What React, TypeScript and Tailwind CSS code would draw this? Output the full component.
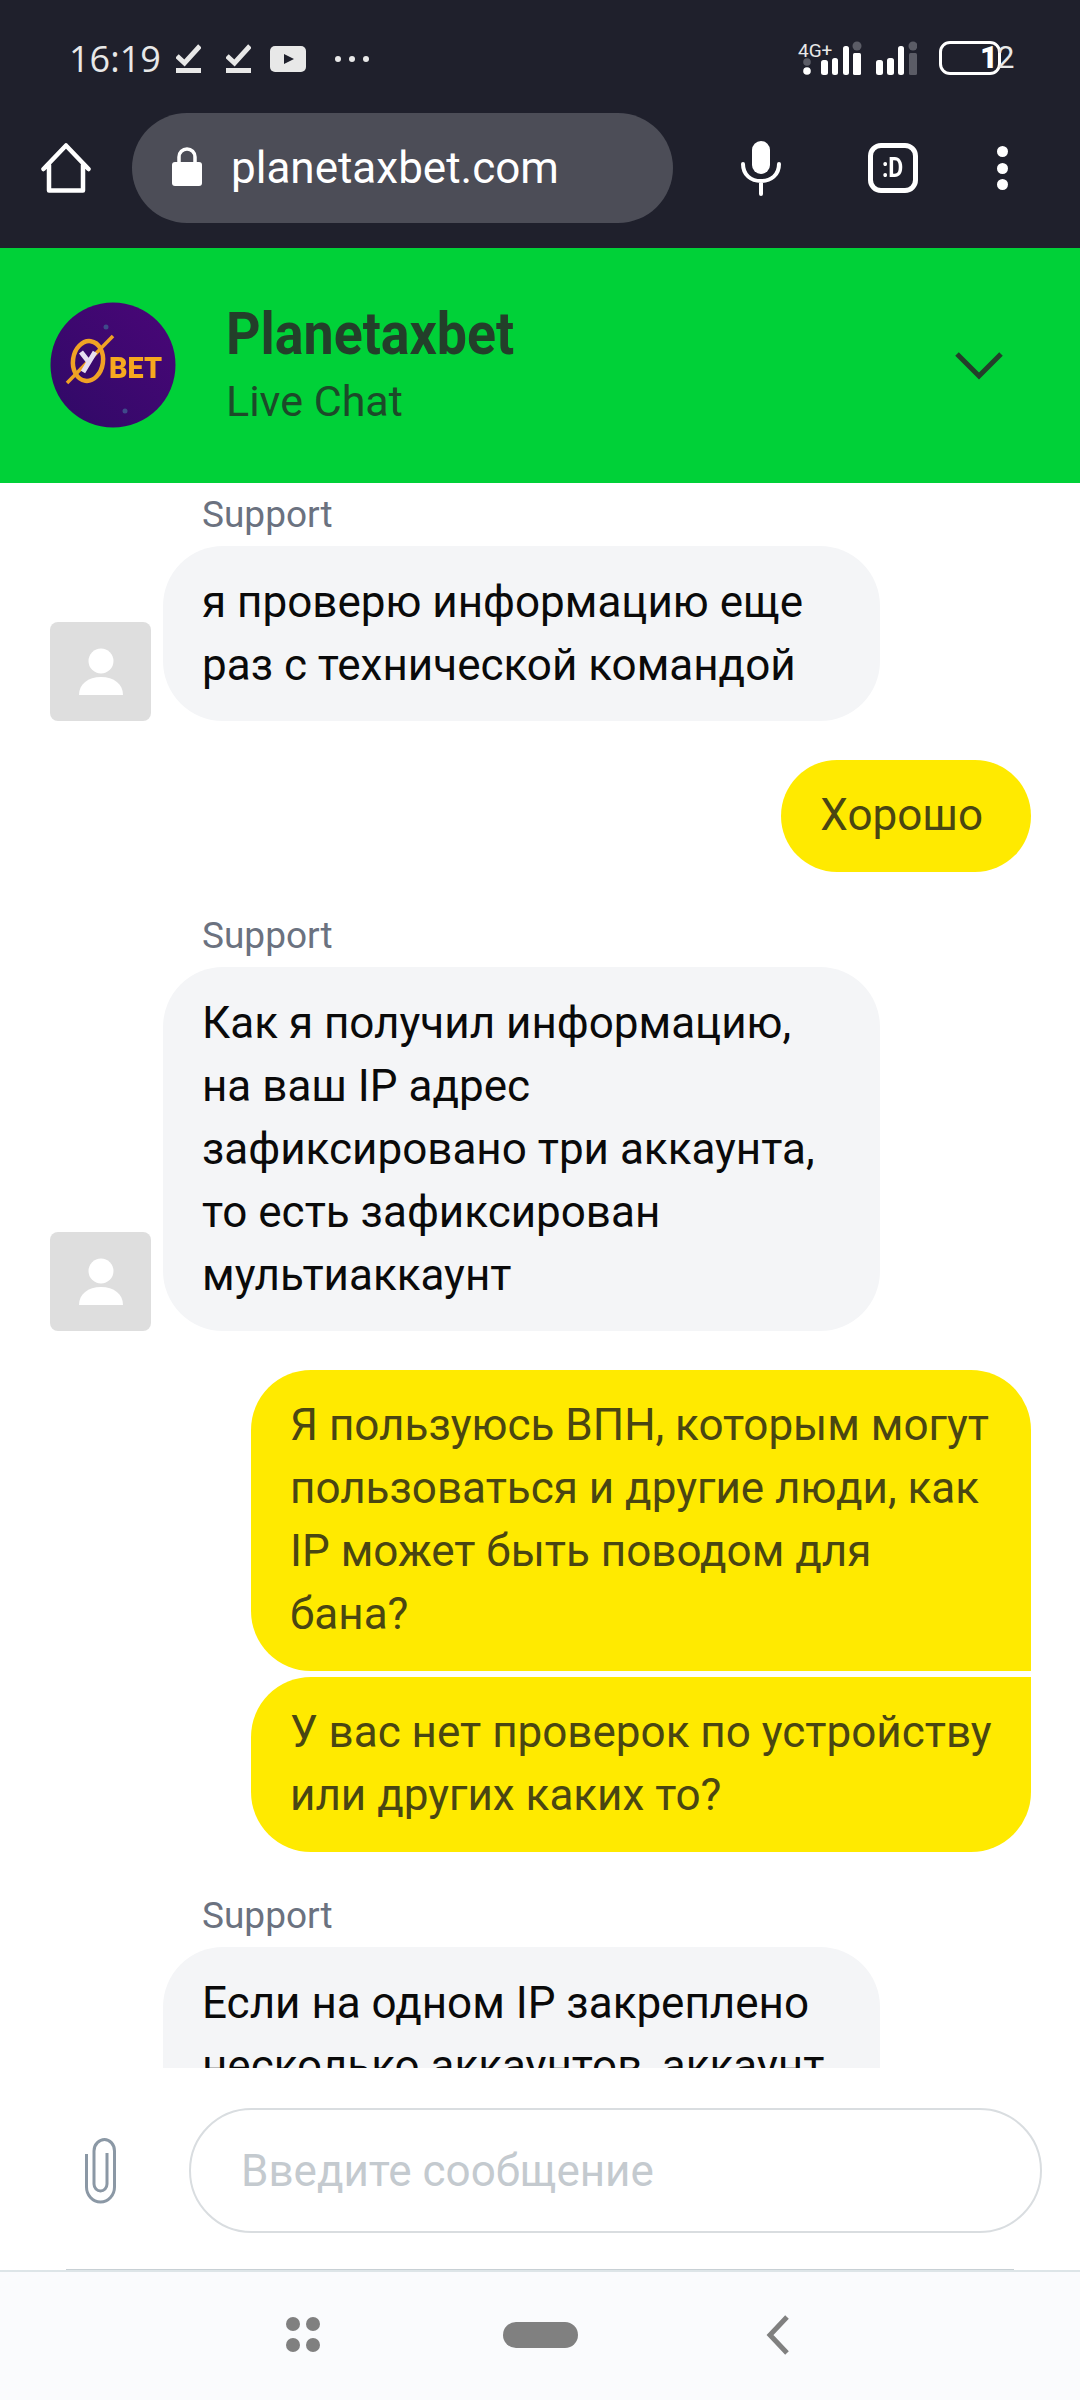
import { ReactNode } from "react";

const font = { fontFamily: "Roboto, sans-serif" };

function CheckIcon({ className }: { className: string }) {
  return (
    <svg width="25" height="30" viewBox="0 0 25 30" className={className}>
      <path d="M1 12l7.5 7L24 2" fill="none" stroke="currentColor" strokeWidth="5" />
      <rect y="24" width="25" height="5" fill="currentColor" />
    </svg>
  );
}

function StatusBar() {
  return (
    <div className="flex h-[113px] items-start justify-between pl-[69px] pr-[79px] pt-[41px] text-[#e8e8e8]">
      <div className="flex h-[36px] items-center">
        <span className="text-[36px] leading-[36px] font-['Open_Sans',sans-serif]">16:19</span>
        <CheckIcon className="ml-[15px]" />
        <CheckIcon className="ml-[25px]" />
        <svg width="36" height="26" viewBox="0 0 36 26" className="ml-[19px]">
          <rect width="36" height="26" rx="5" fill="currentColor" />
          <path d="M14 8l10 5-10 5z" fill="#1f202c" />
        </svg>
        <div className="ml-[29px] flex gap-[8px]">
          <span className="h-[6px] w-[6px] rounded-full bg-[#e8e8e8]" />
          <span className="h-[6px] w-[6px] rounded-full bg-[#e8e8e8]" />
          <span className="h-[6px] w-[6px] rounded-full bg-[#e8e8e8]" />
        </div>
      </div>
      <div className="flex items-start">
        <div className="relative h-[34px] w-[119px]">
          <svg width="119" height="34" viewBox="0 0 119 34">
            <circle cx="9" cy="21" r="3.8" fill="#5b5c66" />
            <circle cx="9" cy="30" r="3.8" fill="#fff" />
            <rect x="23" y="19" width="7" height="15" rx="2.5" fill="#fff" />
            <rect x="34" y="17" width="6" height="17" rx="2.5" fill="#fff" />
            <rect x="45" y="5" width="6" height="29" rx="2.5" fill="#fff" />
            <rect x="55" y="12" width="8" height="22" rx="1.5" fill="#fff" />
            <circle cx="59" cy="5" r="4.5" fill="#5b5c66" />
            <rect x="78" y="19" width="7" height="15" rx="2.5" fill="#fff" />
            <rect x="89" y="17" width="7" height="17" rx="2.5" fill="#fff" />
            <rect x="100" y="5" width="6" height="29" rx="2.5" fill="#fff" />
            <rect x="111" y="12" width="8" height="22" rx="1.5" fill="#5b5c66" />
            <circle cx="115" cy="5" r="4.5" fill="#5b5c66" />
          </svg>
          <span className="absolute left-0 top-0 text-[19px] leading-[20px] text-[#e8e8e8]">4G+</span>
        </div>
        <div className="relative ml-[22px] h-[34px] w-[62px] rounded-[11px] border-[3px] border-white">
          <span className="absolute left-[38px] top-[0px] text-[31px] leading-[28px] font-black text-white">1</span>
          <span className="absolute left-[55px] top-[0px] text-[31px] leading-[28px] text-[#e8e8e8]">2</span>
        </div>
      </div>
    </div>
  );
}

function BrowserBar() {
  return (
    <div className="flex h-[135px] items-start pl-[41px]">
      <svg width="50" height="50" viewBox="0 0 50 50" className="mt-[30px]">
        <path d="M2.5 26L25 2.5 47.5 26M8 22v25.5h34V22" fill="none" stroke="#fff" strokeWidth="4.5" strokeLinecap="round" strokeLinejoin="round" />
      </svg>
      <div className="ml-[41px] flex h-[110px] w-[541px] items-center rounded-full bg-[#4c4d57] pl-[40px]">
        <svg width="30" height="40" viewBox="0 0 30 40" className="mb-[2px]">
          <path d="M7 18v-8a8 8 0 0 1 16 0v8" fill="none" stroke="#fff" strokeWidth="3.5" />
          <rect y="15" width="30" height="24" rx="3" fill="#fff" />
        </svg>
        <span className="ml-[29px] text-[44px] leading-none text-white">planetaxbet.com</span>
      </div>
      <svg width="40" height="56" viewBox="0 0 40 56" className="ml-[68px] mt-[27px]">
        <rect x="11" y="1" width="18" height="33" rx="9" fill="#fff" />
        <path d="M2 24c0 11 8 17 18 17s18-6 18-17M20 41v13" fill="none" stroke="#fff" strokeWidth="4" strokeLinecap="round" />
      </svg>
      <div className="ml-[87px] mt-[30px] flex h-[50px] w-[50px] items-center justify-center rounded-[13px] border-[5px] border-white text-[27px] leading-none font-bold text-white">
        <span className="scale-x-[0.85]">:D</span>
      </div>
      <div className="ml-[79px] mt-[33px] flex flex-col gap-[5.5px]">
        <span className="h-[11px] w-[11px] rounded-full bg-white" />
        <span className="h-[11px] w-[11px] rounded-full bg-white" />
        <span className="h-[11px] w-[11px] rounded-full bg-white" />
      </div>
    </div>
  );
}

function Logo() {
  return (
    <svg width="126" height="126" viewBox="0 0 126 126">
      <defs>
        <linearGradient id="logoBg" x1="1" y1="0" x2="0" y2="1">
          <stop offset="0" stopColor="#4a0678" />
          <stop offset="1" stopColor="#2f0a66" />
        </linearGradient>
      </defs>
      <circle cx="63" cy="63" r="62.5" fill="url(#logoBg)" />
      <circle cx="56" cy="25" r="2.5" fill="#3f4a8a" />
      <circle cx="75" cy="109" r="2.5" fill="#3f4a8a" />
      <g className="blur-[0.7px]">
        <ellipse cx="38" cy="59" rx="15" ry="20" fill="none" stroke="#f0a225" strokeWidth="4.5" transform="rotate(8 38 59)" />
        <path d="M17 81L63 34" stroke="#f0a225" strokeWidth="3.5" />
        <path d="M31 50l7 9M45 50L33 70" fill="none" stroke="#e6dff0" strokeWidth="5" />
        <text x="59" y="76" fontSize="30" fontWeight="900" fill="#f7a91f" textLength="53" lengthAdjust="spacingAndGlyphs" fontFamily="Roboto, sans-serif">BET</text>
      </g>
    </svg>
  );
}

function Header() {
  return (
    <div className="flex h-[235px] items-center bg-[#00d138] pb-[2px] pl-[50px] pr-[76px]">
      <Logo />
      <div className="ml-[50px] flex flex-col">
        <span className="origin-left scale-x-[0.91] text-[59px] leading-[62px] font-bold whitespace-nowrap text-[#233f2a]">Planetaxbet</span>
        <span className="mt-[11px] text-[43px] leading-[50px] text-[#1c4a29]">Live Chat</span>
      </div>
      <svg width="50" height="30" viewBox="0 0 50 30" className="ml-auto">
        <path d="M3 4l22 22L47 4" fill="none" stroke="#233f2a" strokeWidth="5" />
      </svg>
    </div>
  );
}

function Avatar() {
  return (
    <div className="flex h-[99px] w-[101px] shrink-0 items-center justify-center rounded-[8px] bg-[#dedede]">
      <svg width="44" height="47" viewBox="0 0 44 47">
        <circle cx="22" cy="13" r="12.5" fill="#fff" />
        <path d="M0 47c0-11 9-18 22-18s22 7 22 18z" fill="#fff" />
      </svg>
    </div>
  );
}

function Incoming({ children, className = "", bubbleClassName = "" }: { children: ReactNode; className?: string; bubbleClassName?: string }) {
  return (
    <div className={className}>
      <div className="ml-[202px] text-[37px] leading-[48px] text-[#6b7280]">Support</div>
      <div className="mt-[7px] flex items-end pl-[50px]">
        <Avatar />
        <div className={"ml-[12px] w-[717px] rounded-[60px] bg-[#f4f5f7] pb-[24px] pl-[39px] pt-[25px] text-[44px] leading-[63px] text-[#0a0a0a] " + bubbleClassName}>
          {children}
        </div>
      </div>
    </div>
  );
}

function Outgoing({ children, className = "" }: { children: ReactNode; className?: string }) {
  return (
    <div className={"self-end rounded-[60px] bg-[#ffea00] pb-[25px] pl-[39px] pt-[24px] text-[44px] leading-[63px] text-[#4a4612] " + className}>
      {children}
    </div>
  );
}

function ChatInput() {
  return (
    <div className="flex h-[202px] flex-col bg-white">
      <div className="flex flex-1 items-start">
        <svg width="34" height="68" viewBox="0 0 34 68" className="ml-[84px] mt-[69px]">
          <path d="M2.5 17v33c0 8 6 15 14 15s14-7 14-15V14c0-7-5-11.500-10-11.500S10 7 10 14v33c0 4 3 7 6.500 7s6.500-3 6.500-7V16" fill="none" stroke="#8b98a5" strokeWidth="3" />
        </svg>
        <div className="ml-[71px] mt-[40px] flex h-[125px] w-[853px] items-center rounded-full border-[2px] border-[#d9dde0] pl-[50px] text-[44px] text-[#c4cacf]">
          Введите сообщение
        </div>
      </div>
      <div className="mx-[66px] h-[1px] bg-[#c8d0d4]" />
    </div>
  );
}

function NavBar() {
  return (
    <div className="flex h-[130px] items-center border-t-[2px] border-[#dde5e8] bg-[#fafbfd] pb-[3px] pl-[286px]">
      <div className="grid grid-cols-2 gap-x-[6px] gap-y-[7px]">
        <span className="h-[14px] w-[14px] rounded-full bg-[#808080]" />
        <span className="h-[14px] w-[14px] rounded-full bg-[#808080]" />
        <span className="h-[14px] w-[14px] rounded-full bg-[#808080]" />
        <span className="h-[14px] w-[14px] rounded-full bg-[#808080]" />
      </div>
      <span className="ml-[183px] h-[26px] w-[75px] rounded-full bg-[#808080]" />
      <svg width="25" height="40" viewBox="0 0 25 40" className="ml-[187px]">
        <path d="M22 2L5 20l17 18" fill="none" stroke="#808080" strokeWidth="5" />
      </svg>
    </div>
  );
}

export default function App() {
  return (
    <div className="flex h-[2400px] w-[1080px] flex-col overflow-hidden bg-white" style={font}>
      <div className="bg-[#1f202c]">
        <StatusBar />
        <BrowserBar />
      </div>
      <Header />
      <div className="flex h-[1585px] flex-col overflow-hidden pr-[49px] pt-[8px]">
        <Incoming>
          я проверю информацию еще<br />раз с технической командой
        </Incoming>
        <Outgoing className="mt-[39px] pr-[48px]">Хорошо</Outgoing>
        <Incoming className="mt-[40px]">
          Как я получил информацию,<br />на ваш IP адрес<br />зафиксировано три аккаунта,<br />то есть зафиксирован<br />мультиаккаунт
        </Incoming>
        <Outgoing className="mt-[39px] w-[780px] rounded-br-none pr-[39px]">
          Я пользуюсь ВПН, которым могут пользоваться и другие люди, как IP может быть поводом для бана?
        </Outgoing>
        <Outgoing className="mt-[6px] w-[780px] rounded-tr-none pr-[39px]">
          У вас нет проверок по устройству или других каких то?
        </Outgoing>
        <Incoming className="mt-[40px]" bubbleClassName="min-h-[300px] shrink-0">
          Если на одном IP закреплено<br />несколько аккаунтов, аккаунт
        </Incoming>
      </div>
      <ChatInput />
      <NavBar />
    </div>
  );
}
